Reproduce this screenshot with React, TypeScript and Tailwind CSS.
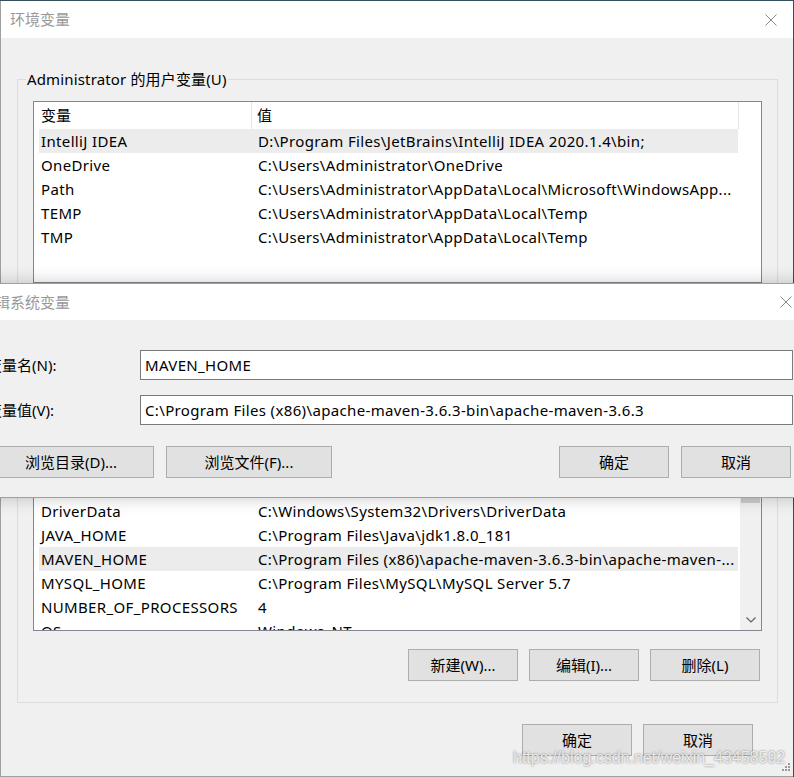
import React from 'react';

const userRows: [string, string, boolean?][] = [
  ['IntelliJ IDEA', 'D:\\Program Files\\JetBrains\\IntelliJ IDEA 2020.1.4\\bin;', true],
  ['OneDrive', 'C:\\Users\\Administrator\\OneDrive'],
  ['Path', 'C:\\Users\\Administrator\\AppData\\Local\\Microsoft\\WindowsApp...'],
  ['TEMP', 'C:\\Users\\Administrator\\AppData\\Local\\Temp'],
  ['TMP', 'C:\\Users\\Administrator\\AppData\\Local\\Temp'],
];

const sysRows: [string, string, boolean?][] = [
  ['CLASSPATH', '.;%JAVA_HOME%\\lib;%JAVA_HOME%\\lib\\tools.jar'],
  ['ComSpec', 'C:\\Windows\\system32\\cmd.exe'],
  ['configsetroot', 'C:\\Windows\\ConfigSetRoot'],
  ['DriverData', 'C:\\Windows\\System32\\Drivers\\DriverData'],
  ['JAVA_HOME', 'C:\\Program Files\\Java\\jdk1.8.0_181'],
  ['MAVEN_HOME', 'C:\\Program Files (x86)\\apache-maven-3.6.3-bin\\apache-maven-...', true],
  ['MYSQL_HOME', 'C:\\Program Files\\MySQL\\MySQL Server 5.7'],
  ['NUMBER_OF_PROCESSORS', '4'],
  ['OS', 'Windows_NT'],
];

function CloseX() {
  return (
    <svg width="12" height="12" viewBox="0 0 12 12" className="shrink-0">
      <path d="M0.5 0.5 L11.5 11.5 M11.5 0.5 L0.5 11.5" stroke="#8a8a8a" strokeWidth="1" fill="none" />
    </svg>
  );
}

function Btn({ label, className = '' }: { label: string; className?: string }) {
  return (
    <div
      className={`h-[32px] w-[110px] shrink-0 flex items-center justify-center bg-[#e1e1e1] border border-[#adadad] text-[15px] text-black ${className}`}
    >
      {label}
    </div>
  );
}

function Header() {
  return (
    <div className="h-[27px] flex items-center text-[15px] text-black shrink-0">
      <div className="w-[218px] h-full flex items-center pl-[7px] border-r border-[#e5e5e5]">变量</div>
      <div className="w-[487px] h-full flex items-center pl-[5px] border-r border-[#e5e5e5]">值</div>
    </div>
  );
}

function Rows({ rows }: { rows: [string, string, boolean?][] }) {
  return (
    <div className="flex flex-col">
      {rows.map(([name, value, sel]) => (
        <div
          key={name}
          className={`ml-[5px] w-[699px] h-[24px] shrink-0 flex items-center text-[15px] text-black whitespace-nowrap tracking-[0.35px] ${sel ? 'bg-[#ececec]' : ''}`}
        >
          <div className="w-[213px] pl-[2px] overflow-hidden">{name}</div>
          <div className="pl-[6px] overflow-hidden">{value}</div>
        </div>
      ))}
    </div>
  );
}

export default function App() {
  return (
    <div className="relative w-[794px] h-[777px] overflow-hidden bg-[#34505c] pt-px font-['Noto_Sans','Noto_Sans_CJK_SC',sans-serif]">
      {/* 环境变量 window */}
      <div className="w-[793px] h-[776px] flex flex-col border-l border-b border-[#a0a0a0] bg-[#f0f0f0]">
        <div className="h-[37px] shrink-0 bg-white flex items-center justify-between pl-[9px] pr-[16px]">
          <span className="text-[15px] text-[#999999]">环境变量</span>
          <CloseX />
        </div>

        <fieldset className="ml-[16px] mt-[31px] w-[761px] border border-[#dcdcdc] pb-[21px]">
          <legend className="ml-[8px] px-px text-[15px] leading-[20px] text-black tracking-[0.15px]">Administrator 的用户变量(U)</legend>
          <div className="ml-[15px] mt-[12px] w-[729px] h-[182px] border border-[#828790] bg-white flex flex-col overflow-hidden">
            <Header />
            <Rows rows={userRows} />
          </div>
          <div className="mt-[18px] flex justify-end gap-[11px] pr-[17px]">
            <Btn label="新建(N)..." />
            <Btn label="编辑(E)..." />
            <Btn label="删除(D)" />
          </div>
        </fieldset>

        <fieldset className="ml-[16px] mt-[12px] w-[761px] border border-[#dcdcdc] pb-[21px]">
          <legend className="ml-[8px] px-px text-[15px] leading-[20px] text-black">系统变量(S)</legend>
          <div className="ml-[15px] mt-[12px] w-[729px] h-[232px] border border-[#828790] bg-white flex overflow-hidden">
            <div className="w-[706px] flex flex-col">
              <Header />
              <Rows rows={sysRows} />
            </div>
            <div className="w-[21px] bg-[#f0f0f0] flex flex-col justify-between">
              <div className="h-[103px] flex flex-col">
                <div className="h-[21px]" />
                <div className="mx-px flex-1 bg-[#cdcdcd]" />
              </div>
              <div className="h-[21px] flex items-center justify-center">
                <svg width="10" height="6" viewBox="0 0 10 6">
                  <path d="M0.5 0.5 L5 5 L9.5 0.5" stroke="#606060" strokeWidth="1.2" fill="none" />
                </svg>
              </div>
            </div>
          </div>
          <div className="mt-[18px] flex justify-end gap-[11px] pr-[17px]">
            <Btn label="新建(W)..." />
            <Btn label="编辑(I)..." />
            <Btn label="删除(L)" />
          </div>
        </fieldset>

        <div className="mt-[21px] flex justify-end gap-[11px] pr-[40px]">
          <Btn label="确定" />
          <Btn label="取消" />
        </div>
      </div>

      {/* 编辑系统变量 dialog */}
      <div className="absolute top-[283px] left-[-30px] w-[846px] h-[215px] border border-[#a0a0a0] bg-[#f0f0f0] flex flex-col shadow-[0_0_16px_rgba(0,0,0,0.22)]">
        <div className="h-[36px] shrink-0 bg-white flex items-center justify-between pl-[9px] pr-[23px]">
          <span className="text-[15px] text-[#999999]">编辑系统变量</span>
          <CloseX />
        </div>
        <div className="pt-[30px] flex flex-col text-[15px] text-black">
          <div className="flex items-center">
            <div className="w-[169px] pl-[16px]">变量名(N):</div>
            <div className="w-[653px] h-[30px] border border-[#7a7a7a] bg-white flex items-center pl-[4px] tracking-[0.35px]">MAVEN_HOME</div>
          </div>
          <div className="mt-[15px] flex items-center">
            <div className="w-[169px] pl-[16px]">变量值(V):</div>
            <div className="w-[653px] h-[30px] border border-[#7a7a7a] bg-white flex items-center pl-[4px] whitespace-nowrap tracking-[0.35px]">
              C:\Program Files (x86)\apache-maven-3.6.3-bin\apache-maven-3.6.3
            </div>
          </div>
          <div className="mt-[21px] flex items-center pl-[17px] pr-[24px]">
            <Btn label="浏览目录(D)..." className="w-[166px]" />
            <Btn label="浏览文件(F)..." className="w-[166px] ml-[12px]" />
            <Btn label="确定" className="ml-auto" />
            <Btn label="取消" className="ml-[12px]" />
          </div>
        </div>
      </div>

      {/* watermark */}
      <div className="absolute left-[513px] top-[746px] text-[16px] font-['Liberation_Sans',sans-serif] text-white/80 [text-shadow:0_0_2px_rgba(90,90,90,0.9)] whitespace-nowrap">
        https://blog.csdn.net/weixin_43458592
      </div>

      {/* resize grip */}
      <svg className="absolute left-[781px] top-[762px]" width="10" height="10" viewBox="0 0 10 10">
        <rect x="7" y="1" width="2" height="2" fill="#9a9a9a" />
        <rect x="4" y="4" width="2" height="2" fill="#9a9a9a" />
        <rect x="7" y="4" width="2" height="2" fill="#9a9a9a" />
        <rect x="1" y="7" width="2" height="2" fill="#9a9a9a" />
        <rect x="4" y="7" width="2" height="2" fill="#9a9a9a" />
        <rect x="7" y="7" width="2" height="2" fill="#9a9a9a" />
      </svg>
    </div>
  );
}
